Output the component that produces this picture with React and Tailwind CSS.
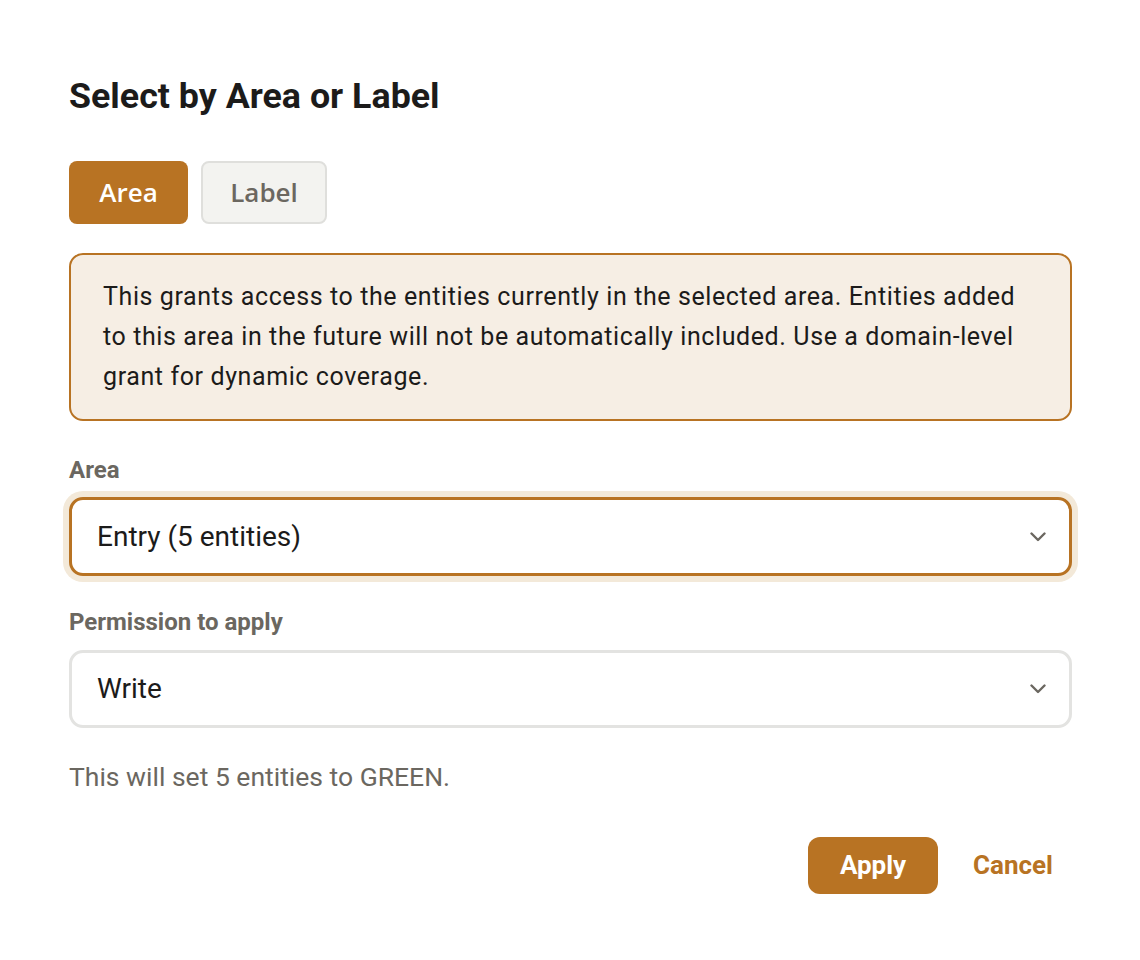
import { useState } from "react";

function Chevron() {
  return (
    <svg width="16" height="10" viewBox="0 0 16 10" fill="none" className="shrink-0">
      <path d="M1.5 1.5l6.5 6.5 6.5-6.5" stroke="#6b6760" strokeWidth="2.4" strokeLinecap="round" strokeLinejoin="round" />
    </svg>
  );
}

function SelectBox({ value, focused }) {
  return (
    <div
      className={
        "flex items-center justify-between pl-[25px] pr-[23px] rounded-[14px] bg-white border-[3px] " +
        (focused ? "h-[79px] border-[#b87323] ring-[6px] ring-[#f3e9d9]" : "h-[78px] border-[#e3e3e1]")
      }
    >
      <span className="text-[28px] text-[#1c1b1a]">{value}</span>
      <Chevron />
    </div>
  );
}

export default function App() {
  const [tab, setTab] = useState("area");

  return (
    <div className="min-h-screen bg-white font-['Roboto',sans-serif] text-[#1c1b1a]">
      <div className="w-[1003px] ml-[69px] pt-[75px]">
        <h1 className="text-[35.8px] leading-[42px] font-bold">Select by Area or Label</h1>

        {/* Tabs */}
        <div className="flex gap-[13px] mt-[44px]">
          <button
            onClick={() => setTab("area")}
            className={
              "h-[63px] w-[119px] rounded-[8px] text-[26px] font-semibold font-['Open_Sans',sans-serif] " +
              (tab === "area" ? "bg-[#b87323] text-white" : "bg-[#f3f3f0] border-2 border-[#dfdfdc] text-[#6b6760]")
            }
          >
            Area
          </button>
          <button
            onClick={() => setTab("label")}
            className={
              "h-[63px] w-[126px] rounded-[8px] text-[26px] font-semibold font-['Open_Sans',sans-serif] " +
              (tab === "label" ? "bg-[#b87323] text-white" : "bg-[#f3f3f0] border-2 border-[#dfdfdc] text-[#6b6760]")
            }
          >
            Label
          </button>
        </div>

        {/* Notice */}
        <div className="mt-[29px] rounded-[14px] border-2 border-[#b87323] bg-[#f6eee4] px-[32px] py-[22px]">
          <p className="text-[25px] leading-[40px] tracking-[0.6px] text-[#1c1b1a]">
            This grants access to the entities currently in the selected area. Entities added to this area in the
            future will not be automatically included. Use a domain-level grant for dynamic coverage.
          </p>
        </div>

        {/* Area select */}
        <label className="block mt-[34px] text-[24px] leading-[30px] font-bold text-[#6b6760]">Area</label>
        <div className="mt-[12px]">
          <SelectBox value="Entry (5 entities)" focused />
        </div>

        {/* Permission select */}
        <label className="block mt-[31px] text-[24px] leading-[30px] font-bold text-[#6b6760]">Permission to apply</label>
        <div className="mt-[13px]">
          <SelectBox value="Write" />
        </div>

        <p className="mt-[31px] text-[26.5px] leading-[36px] text-[#6b6760]">This will set 5 entities to GREEN.</p>

        {/* Actions */}
        <div className="flex justify-end items-center gap-[15px] mt-[42px]">
          <button className="h-[57px] w-[130px] rounded-[12px] bg-[#b87323] text-white text-[26px] font-bold">
            Apply
          </button>
          <button className="h-[57px] pl-[20px] pr-[19px] rounded-[12px] text-[#b87323] text-[26px] font-bold">
            Cancel
          </button>
        </div>
      </div>
    </div>
  );
}
